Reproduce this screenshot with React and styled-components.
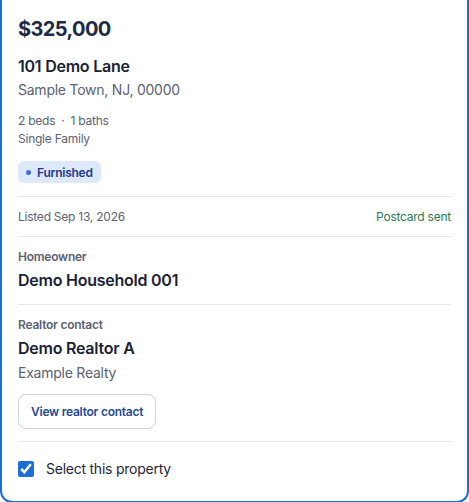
import React, { useState } from 'react'
import styled, { createGlobalStyle } from 'styled-components'

const GlobalStyle = createGlobalStyle`
  * { box-sizing: border-box; }
  body {
    margin: 0;
    background: #fff;
    font-family: Inter, "Noto Sans", "Liberation Sans", sans-serif;
    letter-spacing: -0.015em;
  }
`

const Card = styled.article`
  width: 469px;
  background: #fff;
  border: 2px solid #1d6fd6;
  border-top: none;
  border-radius: 0 0 12px 12px;
  padding: 15px 16px 22px;
  display: flex;
  flex-direction: column;
`

const Price = styled.div`
  font-size: 20px;
  line-height: 28px;
  font-weight: 700;
  letter-spacing: -0.03em;
  color: #1d2a45;
`

const Title = styled.div`
  font-size: 16px;
  line-height: 22px;
  font-weight: 600;
  color: #1a2236;
  margin-top: ${p => p.gap || 0}px;
`

const Sub = styled.div`
  font-size: 14px;
  line-height: 20px;
  color: #5b6270;
  margin-top: ${p => p.gap || 0}px;
`

const Small = styled.div`
  font-size: 12px;
  line-height: 18px;
  color: #5b6270;
  margin-top: ${p => p.gap || 0}px;
`

const Dot = styled.span`
  margin: 0 6px;
`

const Badge = styled.span`
  align-self: flex-start;
  display: inline-flex;
  align-items: center;
  gap: 6px;
  height: 22px;
  margin-top: 13px;
  padding: 0 8px;
  border-radius: 6px;
  background: #dde8fb;
  color: #1e3a8a;
  font-size: 12px;
  font-weight: 600;

  &::before {
    content: '';
    width: 5px;
    height: 5px;
    border-radius: 50%;
    background: #3b6fd8;
  }
`

const Divider = styled.hr`
  border: none;
  border-top: 1px solid #e5e7eb;
  margin: ${p => p.top}px 0 ${p => p.bottom}px;
  width: 100%;
`

const MetaRow = styled.div`
  display: flex;
  justify-content: space-between;
  align-items: center;
  font-size: 12px;
  line-height: 18px;
  color: #5b6270;
`

const Status = styled.span`
  color: #2e7a4f;
`

const Label = styled.div`
  font-size: 12px;
  line-height: 18px;
  font-weight: 600;
  color: #5b6270;
`

const OutlineButton = styled.button`
  align-self: flex-start;
  margin-top: 11px;
  height: 35px;
  padding: 0 12px;
  background: #fff;
  border: 1px solid #cbd3de;
  border-radius: 8px;
  font-family: inherit;
  font-size: 12px;
  font-weight: 600;
  letter-spacing: inherit;
  color: #1e4a8f;
  cursor: pointer;
`

const CheckRow = styled.label`
  display: flex;
  align-items: center;
  gap: 12px;
  margin-top: 1px;
  font-size: 14px;
  line-height: 20px;
  color: #1f2737;
  cursor: pointer;

  input {
    width: 16px;
    height: 16px;
    margin: 0;
    accent-color: #1d6fd6;
  }
`

export default function App() {
  const [selected, setSelected] = useState(true)

  return (
    <>
      <GlobalStyle />
      <Card>
        <Price>$325,000</Price>
        <Title gap={12}>101 Demo Lane</Title>
        <Sub gap={3}>Sample Town, NJ, 00000</Sub>
        <Small gap={12}>2 beds<Dot>·</Dot>1 baths</Small>
        <Small>Single Family</Small>
        <Badge>Furnished</Badge>

        <Divider top={13} bottom={11} />
        <MetaRow>
          <span>Listed Sep 13, 2026</span>
          <Status>Postcard sent</Status>
        </MetaRow>
        <Divider top={10} bottom={11} />

        <Label>Homeowner</Label>
        <Title gap={3}>Demo Household 001</Title>

        <Divider top={13} bottom={11} />
        <Label>Realtor contact</Label>
        <Title gap={3}>Demo Realtor A</Title>
        <Sub gap={4}>Example Realty</Sub>
        <OutlineButton>View realtor contact</OutlineButton>

        <Divider top={12} bottom={16} />
        <CheckRow>
          <input
            type="checkbox"
            checked={selected}
            onChange={e => setSelected(e.target.checked)}
          />
          Select this property
        </CheckRow>
      </Card>
    </>
  )
}
